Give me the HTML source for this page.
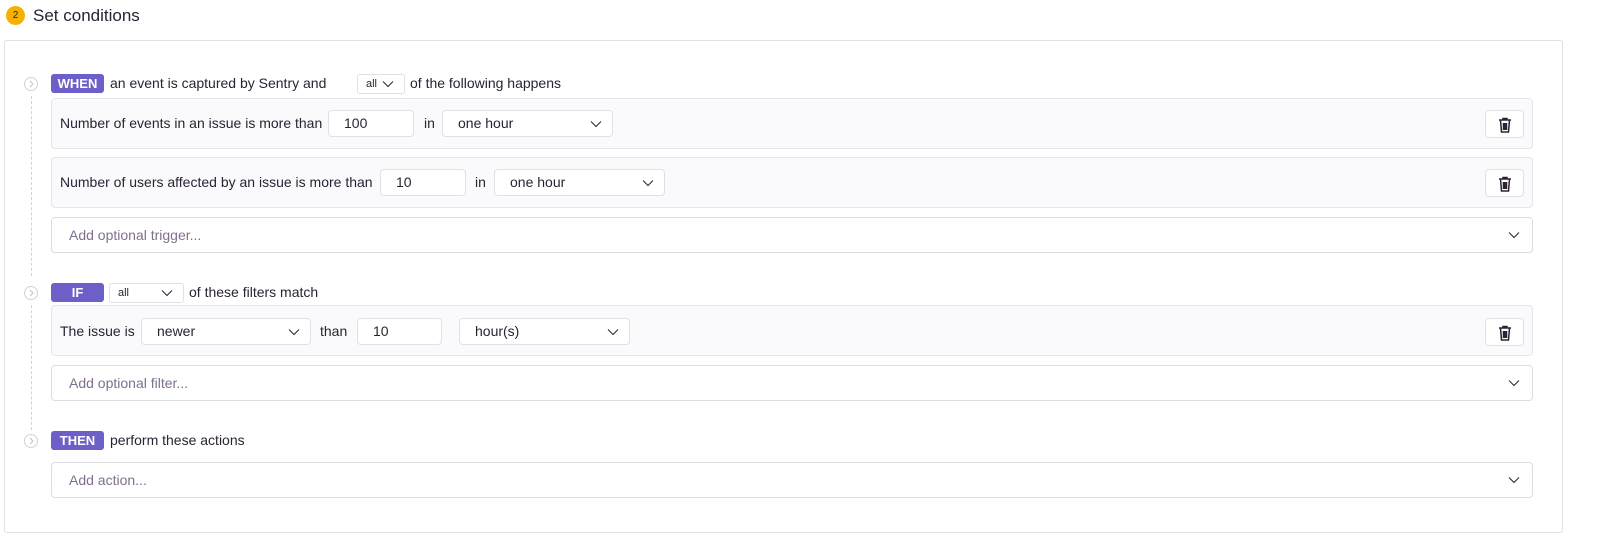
<!DOCTYPE html>
<html><head><meta charset="utf-8"><style>
*{box-sizing:border-box;margin:0;padding:0}
body{width:1600px;height:553px;background:#fff;font-family:"Liberation Sans",sans-serif;color:#2b2233;font-size:14px;position:relative;overflow:hidden}
.a{position:absolute}
.num{left:6px;top:6px;width:19px;height:19px;border-radius:50%;background:#f5b000;font-size:10px;text-align:center;line-height:19px;color:#2b2233}
.title{left:33px;top:6px;font-size:17px;color:#2b2233}
.panel{left:4px;top:40px;width:1559px;height:493px;border:1px solid #e2dfe6;border-radius:3px}
.circ{width:14px;height:14px;border:1px solid #d4d0da;border-radius:50%}
.dash{left:31px;width:0;border-left:1px dashed #d4d0da}
.badge{height:19px;background:#6c5fc7;color:#fff;font-weight:bold;border-radius:3px;text-align:center;line-height:19px;font-size:13px;width:53px}
.t{line-height:19px}
.sel{border:1px solid #e2dfe6;border-radius:3px;background:#fff}
.sel svg{position:absolute;right:10px;top:50%;margin-top:-4px}
.row{left:51px;width:1482px;height:51px;background:#fafafc;border:1px solid #e7e5ec;border-radius:4px}
.in{border:1px solid #e2dfe6;border-radius:4px;background:#fff;height:27px;line-height:25px;padding-left:15px;font-size:14px}
.add{left:51px;width:1482px;height:36px;border:1px solid #dedbe3;border-radius:4px;background:#fff;color:#80708f;line-height:34px;padding-left:17px}
.trash{left:1485px;width:39px;height:28px;border:1px solid #e2dfe6;border-radius:4px;background:#fff}
.trash svg{position:absolute;left:12px;top:6px}
</style></head><body>
<div class="a num">2</div>
<div class="a title">Set conditions</div>
<div class="a panel"></div>

<svg width="0" height="0" style="position:absolute"><defs>
<symbol id="chev" viewBox="0 0 12 8"><path d="M1 1.5 L6 6.5 L11 1.5" fill="none" stroke="#2b2233" stroke-width="1"/></symbol>
<symbol id="tr" viewBox="0 0 14 16"><path d="M1 3h12M5 3V1.5h4V3M2.5 3l1 12h7l1-12M5.5 6v7M7 6v7M8.5 6v7" fill="none" stroke="#2b2233" stroke-width="1.5"/></symbol>
</defs></svg>

<div class="a circ" style="left:24px;top:77px"><svg width="14" height="14" style="position:absolute;left:-1px;top:-1px"><path d="M6 4l3 3-3 3" fill="none" stroke="#c6c0cc" stroke-width="1"/></svg></div>
<div class="a dash" style="top:96px;height:180px"></div>
<div class="a circ" style="left:24px;top:286px"><svg width="14" height="14" style="position:absolute;left:-1px;top:-1px"><path d="M6 4l3 3-3 3" fill="none" stroke="#c6c0cc" stroke-width="1"/></svg></div>
<div class="a dash" style="top:305px;height:125px"></div>
<div class="a circ" style="left:24px;top:434px"><svg width="14" height="14" style="position:absolute;left:-1px;top:-1px"><path d="M6 4l3 3-3 3" fill="none" stroke="#c6c0cc" stroke-width="1"/></svg></div>

<div class="a badge" style="left:51px;top:74px">WHEN</div>
<div class="a t" style="left:110px;top:74px">an event is captured by Sentry and</div>
<div class="a sel" style="left:357px;top:74px;width:48px;height:20px;font-size:11px;line-height:18px;padding-left:8px">all<svg width="12" height="8"><use href="#chev"/></svg></div>
<div class="a t" style="left:410px;top:74px">of the following happens</div>

<div class="a row" style="top:98px"></div>
<div class="a t" style="left:60px;top:114px">Number of events in an issue is more than</div>
<div class="a in" style="left:328px;top:110px;width:86px">100</div>
<div class="a t" style="left:424px;top:114px">in</div>
<div class="a sel in" style="left:442px;top:110px;width:171px">one hour<svg width="12" height="8"><use href="#chev"/></svg></div>
<div class="a trash" style="top:110px"><svg width="14" height="16"><use href="#tr"/></svg></div>

<div class="a row" style="top:157px"></div>
<div class="a t" style="left:60px;top:173px">Number of users affected by an issue is more than</div>
<div class="a in" style="left:380px;top:169px;width:86px">10</div>
<div class="a t" style="left:475px;top:173px">in</div>
<div class="a sel in" style="left:494px;top:169px;width:171px">one hour<svg width="12" height="8"><use href="#chev"/></svg></div>
<div class="a trash" style="top:169px"><svg width="14" height="16"><use href="#tr"/></svg></div>

<div class="a add sel" style="top:217px">Add optional trigger...<svg width="12" height="8" style="right:12px"><use href="#chev"/></svg></div>

<div class="a badge" style="left:51px;top:283px">IF</div>
<div class="a sel" style="left:109px;top:283px;width:75px;height:20px;font-size:11px;line-height:18px;padding-left:8px">all<svg width="12" height="8"><use href="#chev"/></svg></div>
<div class="a t" style="left:189px;top:283px">of these filters match</div>

<div class="a row" style="top:305px"></div>
<div class="a t" style="left:60px;top:322px">The issue is</div>
<div class="a sel in" style="left:141px;top:318px;width:170px">newer<svg width="12" height="8"><use href="#chev"/></svg></div>
<div class="a t" style="left:320px;top:322px">than</div>
<div class="a in" style="left:357px;top:318px;width:85px">10</div>
<div class="a sel in" style="left:459px;top:318px;width:171px">hour(s)<svg width="12" height="8"><use href="#chev"/></svg></div>
<div class="a trash" style="top:318px"><svg width="14" height="16"><use href="#tr"/></svg></div>

<div class="a add sel" style="top:365px">Add optional filter...<svg width="12" height="8" style="right:12px"><use href="#chev"/></svg></div>

<div class="a badge" style="left:51px;top:431px">THEN</div>
<div class="a t" style="left:110px;top:431px">perform these actions</div>
<div class="a add sel" style="top:462px">Add action...<svg width="12" height="8" style="right:12px"><use href="#chev"/></svg></div>
</body></html>
